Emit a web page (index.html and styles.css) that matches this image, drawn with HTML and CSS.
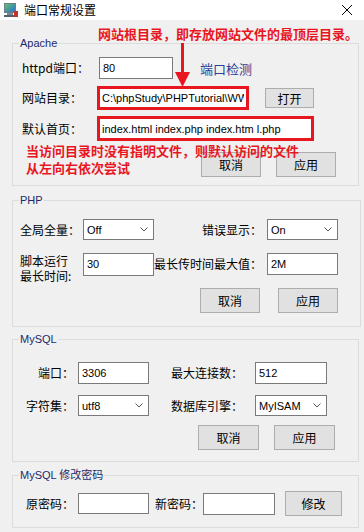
FILE: index.html
```html
<!DOCTYPE html>
<html lang="zh-CN">
<head>
  <meta charset="UTF-8">
  <title>端口常规设置</title>
  <link rel="stylesheet" href="styles.css">
</head>
<body>
  <div class="window">
    <div class="titlebar">
      <svg class="app-icon" width="16" height="16" viewBox="0 0 16 16">
        <defs>
          <linearGradient id="scr" x1="0" y1="0" x2="1" y2="1">
            <stop offset="0" stop-color="#5fc46a"/>
            <stop offset="1" stop-color="#2f6fd0"/>
          </linearGradient>
        </defs>
        <rect x="1" y="1" width="12" height="10" fill="#6f7d8a"/>
        <rect x="2" y="2" width="10" height="8" fill="url(#scr)"/>
        <rect x="4" y="11" width="6" height="2" fill="#7c8792"/>
        <rect x="1" y="13" width="12" height="2" fill="#55616c"/>
        <rect x="11" y="9" width="4" height="6" fill="#c8322c"/>
      </svg>
      <span class="title">端口常规设置</span>
      <svg class="close" width="12" height="12" viewBox="0 0 12 12">
        <path d="M1 1L11 11M11 1L1 11" stroke="#000" stroke-width="1"/>
      </svg>
    </div>

    <div class="content">
      <fieldset class="group apache">
        <legend>Apache</legend>
        <div class="inner">
          <div class="row">
            <span class="lbl lbl-port">httpd端口：</span>
            <input class="field port" value="80">
            <span class="link">端口检测</span>
          </div>
          <div class="row gap7">
            <span class="lbl lbl-apache">网站目录：</span>
            <input class="field marked root" value="C:\phpStudy\PHPTutorial\WWW">
            <button class="btn open">打开</button>
          </div>
          <div class="row gap6">
            <span class="lbl lbl-apache">默认首页：</span>
            <input class="field marked index" value="index.html index.php index.htm l.php">
          </div>
          <div class="actions">
            <button class="btn">取消</button>
            <button class="btn">应用</button>
          </div>
        </div>
      </fieldset>

      <fieldset class="group php">
        <legend>PHP</legend>
        <div class="inner">
          <div class="row">
            <span class="lbl lbl-php">全局全量：</span>
            <div class="combo">Off<svg width="8" height="5" viewBox="0 0 8 5"><path d="M0.5 0.5L4 4L7.5 0.5" fill="none" stroke="#555"/></svg></div>
            <span class="lbl lbl-php2">错误显示：</span>
            <div class="combo">On<svg width="8" height="5" viewBox="0 0 8 5"><path d="M0.5 0.5L4 4L7.5 0.5" fill="none" stroke="#555"/></svg></div>
          </div>
          <div class="row gap12">
            <span class="lbl lbl-php two-line">脚本运行<br>最长时间:</span>
            <input class="field tall" value="30">
            <span class="lbl lbl-php2">最长传时间最大值：</span>
            <input class="field" value="2M">
          </div>
          <div class="actions wide">
            <button class="btn">取消</button>
            <button class="btn">应用</button>
          </div>
        </div>
      </fieldset>

      <fieldset class="group mysql">
        <legend>MySQL</legend>
        <div class="inner">
          <div class="row">
            <span class="lbl lbl-my">端口：</span>
            <input class="field" value="3306">
            <span class="lbl lbl-my2">最大连接数：</span>
            <input class="field" value="512">
          </div>
          <div class="row gap11">
            <span class="lbl lbl-my">字符集：</span>
            <div class="combo">utf8<svg width="8" height="5" viewBox="0 0 8 5"><path d="M0.5 0.5L4 4L7.5 0.5" fill="none" stroke="#555"/></svg></div>
            <span class="lbl lbl-my2">数据库引擎：</span>
            <div class="combo">MyISAM<svg width="8" height="5" viewBox="0 0 8 5"><path d="M0.5 0.5L4 4L7.5 0.5" fill="none" stroke="#555"/></svg></div>
          </div>
          <div class="actions">
            <button class="btn">取消</button>
            <button class="btn">应用</button>
          </div>
        </div>
      </fieldset>

      <fieldset class="group password">
        <legend>MySQL 修改密码</legend>
        <div class="inner">
          <div class="row">
            <span class="lbl lbl-my">原密码：</span>
            <input class="field short" value="">
            <span class="lbl lbl-new">新密码：</span>
            <input class="field" value="">
            <button class="btn change">修改</button>
          </div>
        </div>
      </fieldset>
    </div>

    <!-- 标注 -->
    <div class="note note-root">网站根目录，即存放网站文件的最顶层目录。</div>
    <svg class="arrow" width="15" height="46" viewBox="0 0 15 46">
      <rect x="6" y="0" width="3" height="32" fill="#e8161e"/>
      <polygon points="0,29 15,29 7.5,44" fill="#e8161e"/>
    </svg>
    <div class="note note-index">当访问目录时没有指明文件，则默认访问的文件<br>从左向右依次尝试</div>
  </div>
</body>
</html>
```

FILE: styles.css
```css
*{
  margin: 0;
  padding: 0;
  box-sizing: border-box;
}
body{
  background-color: #f0f0f0;
  font-family: "Liberation Sans", "Noto Sans CJK SC", sans-serif;
  font-size: 12px;
  color: #000;
}
.window{
  position: relative;
  width: 364px;
  height: 532px;
  overflow: hidden;
}

/* 标题栏 */
.titlebar{
  display: flex;
  align-items: center;
  height: 20px;
  background-color: #fff;
  padding-left: 3px;
}
.app-icon{
  margin-right: 5px;
}
.title{
  font-family: "Noto Sans CJK SC", sans-serif;
  line-height: 20px;
}
.close{
  margin-left: auto;
  margin-right: 11px;
}

/* 分组框 */
.content{
  padding: 16px 5px 0 12px;
}
.group{
  border: 1px solid #dcdcdc;
}
.group legend{
  margin-left: 6px;
  padding: 0 1px;
  font-size: 11px;
  line-height: 14px;
  color: #1b2a6b;
}
.php{ margin-top: 7px; }
.mysql{ margin-top: 5px; }
.password{ margin-top: 6px; }

.apache .inner{ padding: 7px 22px 8px 9px; }
.php .inner{ padding: 12px 22px 13px 7px; }
.mysql .inner{ padding: 16px 23px 11px 0; }
.password .inner{ padding: 9px 0 11px 0; }

.row{
  display: flex;
  align-items: center;
}
.gap6{ margin-top: 6px; }
.gap7{ margin-top: 7px; }
.gap11{ margin-top: 11px; }
.gap12{ margin-top: 12px; }

.lbl{
  flex: none;
  line-height: 16px;
  white-space: nowrap;
  font-family: "Noto Sans CJK SC", sans-serif;
}
.lbl-port{ width: 77px; }
.lbl-apache{ width: 75px; }
.lbl-php{ width: 63px; }
.lbl-php2{ width: 113px; text-align: right; padding-right: 5px; }
.lbl-my{ width: 65px; text-align: right; padding-right: 4px; }
.lbl-my2{ width: 106px; text-align: right; padding-right: 12px; }
.lbl-new{ width: 54px; text-align: right; }
.two-line{
  align-self: flex-start;
  height: 23px;
  margin-top: 1px;
  line-height: 15px;
}

/* 输入框 */
.field{
  flex: none;
  width: 71px;
  height: 22px;
  border: 1px solid #7a7a7a;
  background-color: #fff;
  padding: 0 3px;
  font-family: "Liberation Sans", sans-serif;
  font-size: 11px;
  color: #000;
  outline: none;
}
.field.tall{ height: 23px; }
.field.short{ height: 21px; }
.port{ width: 74px; }
.marked{
  border: 3px solid #e8161e;
  padding: 0 2px;
}
.root{ width: 152px; height: 24px; }
.index{ width: 217px; height: 25px; }

.combo{
  flex: none;
  display: flex;
  align-items: center;
  justify-content: space-between;
  width: 71px;
  height: 21px;
  border: 1px solid #7a7a7a;
  background-color: #fff;
  padding: 0 5px 0 3px;
  font-size: 11px;
}
.mysql .field + .lbl + .field,
.mysql .combo + .lbl + .combo,
.password .lbl-new + .field{
  width: 72px;
}

.link{
  margin-left: 27px;
  font-family: "Noto Sans CJK SC", sans-serif;
  font-size: 13px;
  color: #2c3e95;
}

/* 按钮 */
.btn{
  width: 60px;
  height: 25px;
  border: 1px solid #adadad;
  background-color: #e1e1e1;
  font-family: "Noto Sans CJK SC", sans-serif;
  font-size: 12px;
  color: #000;
}
.open{
  width: 49px;
  height: 20px;
  margin-left: 16px;
}
.change{
  width: 57px;
  margin-left: 10px;
}
.actions{
  display: flex;
  justify-content: flex-end;
  gap: 15px;
  margin-top: 11px;
}
.php .actions{ margin-top: 12px; gap: 18px; }
.mysql .actions{ margin-top: 9px; }
.mysql .btn{ width: 61px; }

/* 红色标注 */
.note{
  position: absolute;
  color: #e8161e;
  font-family: "Noto Sans CJK SC", sans-serif;
  font-size: 13px;
  font-weight: bold;
  line-height: 17px;
  white-space: nowrap;
}
.note-root{
  left: 98px;
  top: 25px;
}
.note-index{
  left: 26px;
  top: 142px;
}
.arrow{
  position: absolute;
  left: 175px;
  top: 43px;
}
```
